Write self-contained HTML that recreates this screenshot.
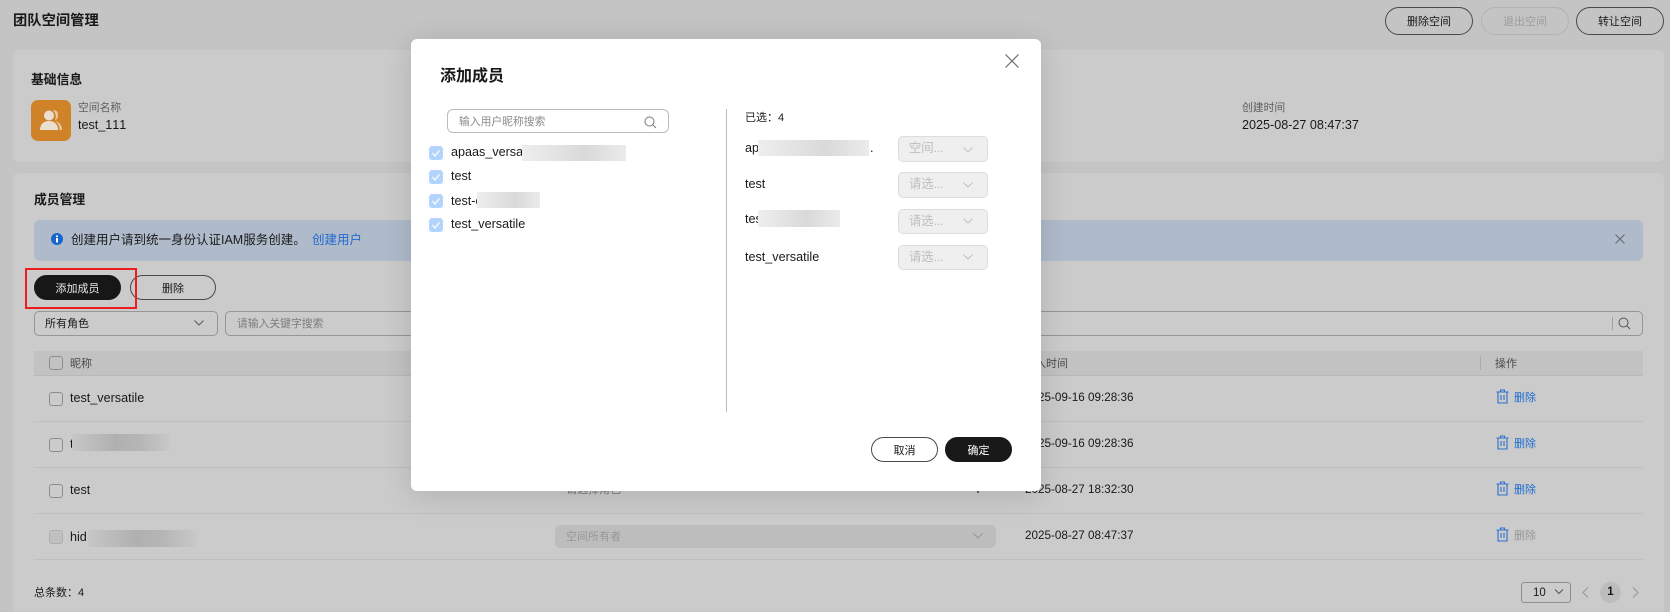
<!DOCTYPE html>
<html lang="zh"><head><meta charset="utf-8"><title>团队空间管理</title>
<style>
html,body{margin:0;padding:0;width:1670px;height:612px;overflow:hidden;background:#c4c4c4}
body{position:relative;font-family:"Liberation Sans","Noto Sans CJK SC",sans-serif;color:#191919;font-size:12.6px;font-kerning:none}
.a{position:absolute;box-sizing:border-box}
.t{position:absolute;line-height:20px;height:20px;white-space:nowrap}
.c{background:#cbcbcb;border-radius:6px}
.btn{position:absolute;box-sizing:border-box;border:1px solid #4a4a4a;border-radius:14px;text-align:center;font-size:11px;display:flex;align-items:center;justify-content:center;color:#191919}
.cb{position:absolute;box-sizing:border-box;width:14px;height:14px;border:1px solid #8e8e8e;border-radius:3px}
.ln{position:absolute;left:34px;width:1609px;height:1px;background:#bfbfbf}
.g{color:#5f5f5f}
.blur{position:absolute;background:linear-gradient(90deg,#c6c6c6,#b0b0b0 45%,#b6b6b6 70%,#c8c8c8)}
.blur2{position:absolute;background:linear-gradient(90deg,#eeeeee,#e4e4e4 30%,#d9d9d9 60%,#ebebeb)}
.del{color:#1c6dd0}
.sel{position:absolute;box-sizing:border-box;left:898px;width:90px;background:#efefef;border:1px solid #dcdcdc;border-radius:5px;color:#bdbdbd;font-size:12.3px;padding-left:10px;line-height:23px}
.chk{position:absolute;left:429px;width:14px;height:14px;background:#b3d5fd;border-radius:3px}
svg{position:absolute;overflow:visible}
</style></head><body>

<div class="t" style="left:13px;top:11px;font-size:14.3px;font-weight:700">团队空间管理</div>
<div class="btn" style="left:1385px;top:7px;width:88px;height:28px">删除空间</div>
<div class="btn" style="left:1481px;top:7px;width:88px;height:28px;border-color:#b2b2b2;color:#9c9c9c">退出空间</div>
<div class="btn" style="left:1576px;top:7px;width:88px;height:28px">转让空间</div>

<div class="a c" style="left:13px;top:50px;width:1651px;height:112px"></div>
<div class="t" style="left:31px;top:70px;font-size:12.8px;font-weight:700">基础信息</div>
<div class="a" style="left:31px;top:100px;width:40px;height:41px;border-radius:7px;background:#cf8227"></div>
<svg style="left:31px;top:100px" width="40" height="41" viewBox="0 0 40 41"><circle cx="18" cy="15.5" r="5" fill="#eadfd0"/><path d="M22 10.500c3-1 5 1 5 4.500s-1.500 4.500-3 5.500c1-3 1.500-7-2-10z" fill="#e6c9a2"/><path d="M9 30c0-6 4-9 9-9s9 3 9 9z" fill="#eadfd0"/><path d="M24 21c4 1 7 4 7 9h-2.500c0-4-1.500-7-4.500-9z" fill="#e6c9a2"/></svg>
<div class="t g" style="left:78px;top:98px;font-size:10.8px">空间名称</div>
<div class="t" style="left:78px;top:115px">test_111</div>
<div class="t g" style="left:1242px;top:98px;font-size:10.8px">创建时间</div>
<div class="t" style="left:1242px;top:115px;font-size:12.6px">2025-08-27 08:47:37</div>

<div class="a c" style="left:13px;top:173px;width:1651px;height:439px;border-radius:6px 6px 0 0"></div>
<div class="t" style="left:34px;top:190px;font-size:12.8px;font-weight:700">成员管理</div>

<div class="a" style="left:34px;top:220px;width:1609px;height:41px;background:#afbbcb;border-radius:6px"></div>
<svg style="left:51px;top:233px" width="12" height="12" viewBox="0 0 12 12"><circle cx="6" cy="6" r="6" fill="#1766cf"/><rect x="5" y="2.500" width="2" height="1.600" fill="#fff"/><rect x="5" y="5" width="2" height="4.500" fill="#fff"/></svg>
<div class="t" style="left:71px;top:230px;font-size:12.5px">创建用户请到统一身份认证IAM服务创建。</div>
<div class="t" style="left:312px;top:230px;font-size:12.5px;color:#2468cf">创建用户</div>
<svg style="left:1615px;top:234px" width="10" height="10" viewBox="0 0 10 10"><path d="M.5.500l9 9M9.500.500l-9 9" stroke="#5f6670" stroke-width="1" fill="none"/></svg>

<div class="btn" style="left:34px;top:275px;width:87px;height:25px;background:#171717;color:#e8e8e8;border-color:#171717">添加成员</div>
<div class="btn" style="left:130px;top:275px;width:86px;height:25px">删除</div>
<div class="a" style="left:25px;top:268px;width:112px;height:41px;border:2px solid #ee1c1c"></div>

<div class="a" style="left:34px;top:311px;width:184px;height:25px;border:1px solid #969696;border-radius:5px"></div>
<div class="t" style="left:45px;top:314px;font-size:11px">所有角色</div>
<svg style="left:194px;top:320px" width="10" height="6" viewBox="0 0 10 6"><path d="M.5.500L5 5 9.500.500" stroke="#5a5a5a" fill="none"/></svg>
<div class="a" style="left:225px;top:311px;width:1418px;height:25px;border:1px solid #969696;border-radius:5px"></div>
<div class="t" style="left:237px;top:314px;font-size:10.8px;color:#7c7c7c">请输入关键字搜索</div>
<div class="a" style="left:1612px;top:317px;width:1px;height:13px;background:#a0a0a0"></div>
<svg style="left:1618px;top:317px" width="13" height="13" viewBox="0 0 13 13"><circle cx="5.500" cy="5.500" r="4.500" stroke="#555" fill="none"/><path d="M9 9l3 3" stroke="#555"/></svg>

<div class="a" style="left:34px;top:351px;width:1609px;height:25px;background:#c2c2c2;border-bottom:1px solid #b8b8b8"></div>
<div class="cb" style="left:49px;top:356px"></div>
<div class="t g" style="left:70px;top:354px;font-size:11px;color:#4c4c4c">昵称</div>
<div class="t" style="left:1024px;top:354px;font-size:11px;color:#4c4c4c">加入时间</div>
<div class="a" style="left:1480px;top:356px;width:1px;height:14px;background:#aaa"></div>
<div class="t" style="left:1495px;top:354px;font-size:11px;color:#4c4c4c">操作</div>

<div class="cb" style="left:49px;top:392px"></div>
<div class="t" style="left:70px;top:388px">test_versatile</div>
<div class="cb" style="left:49px;top:438px"></div>
<div class="t" style="left:70px;top:434px">t</div>
<div class="blur" style="left:72px;top:434px;width:98px;height:17px"></div>
<div class="cb" style="left:49px;top:484px"></div>
<div class="t" style="left:70px;top:480px">test</div>
<div class="cb" style="left:49px;top:530px;background:#c0c0c0;border-color:#b0b0b0"></div>
<div class="t" style="left:70px;top:527px">hid</div>
<div class="blur" style="left:88px;top:530px;width:108px;height:17px"></div>

<div class="ln" style="top:421px"></div><div class="ln" style="top:467px"></div><div class="ln" style="top:513px"></div><div class="ln" style="top:559px"></div>

<div class="t" style="left:566px;top:480px;font-size:11px;color:#777">请选择角色</div>
<div class="a" style="left:555px;top:525px;width:441px;height:23px;background:#bdbdbd;border-radius:5px"></div>
<div class="t" style="left:566px;top:527px;font-size:11px;color:#979797">空间所有者</div>
<svg style="left:973px;top:533px" width="10" height="6" viewBox="0 0 10 6"><path d="M.5.500L5 5 9.500.500" stroke="#959595" fill="none"/></svg>
<div class="a" style="left:977px;top:491px;width:2px;height:2px;background:#666"></div>

<div class="t" style="left:1025px;top:388px;font-size:11.7px">2025-09-16 09:28:36</div>
<div class="t" style="left:1025px;top:434px;font-size:11.7px">2025-09-16 09:28:36</div>
<div class="t" style="left:1025px;top:480px;font-size:11.7px">2025-08-27 18:32:30</div>
<div class="t" style="left:1025px;top:526px;font-size:11.7px">2025-08-27 08:47:37</div>

<svg style="left:1496px;top:389px" width="13" height="15" viewBox="0 0 13 15"><path d="M.5 3h12M4.500 3V1h4v2M2 3v11h9V3M5 6v5M8 6v5" fill="none" stroke="#2c6fd0" stroke-width="1.100"/></svg>
<div class="t del" style="left:1514px;top:388px;font-size:11px">删除</div>
<svg style="left:1496px;top:435px" width="13" height="15" viewBox="0 0 13 15"><path d="M.5 3h12M4.500 3V1h4v2M2 3v11h9V3M5 6v5M8 6v5" fill="none" stroke="#2c6fd0" stroke-width="1.100"/></svg>
<div class="t del" style="left:1514px;top:434px;font-size:11px">删除</div>
<svg style="left:1496px;top:481px" width="13" height="15" viewBox="0 0 13 15"><path d="M.5 3h12M4.500 3V1h4v2M2 3v11h9V3M5 6v5M8 6v5" fill="none" stroke="#2c6fd0" stroke-width="1.100"/></svg>
<div class="t del" style="left:1514px;top:480px;font-size:11px">删除</div>
<svg style="left:1496px;top:527px" width="13" height="15" viewBox="0 0 13 15"><path d="M.5 3h12M4.500 3V1h4v2M2 3v11h9V3M5 6v5M8 6v5" fill="none" stroke="#2c6fd0" stroke-width="1.100"/></svg>
<div class="t" style="left:1514px;top:526px;font-size:11px;color:#979797">删除</div>

<div class="t" style="left:34px;top:583px;font-size:11px">总条数：4</div>
<div class="a" style="left:1521px;top:582px;width:50px;height:21px;border:1px solid #8e8e8e;border-radius:3px"></div>
<div class="t" style="left:1533px;top:583px;font-size:11.5px">10</div>
<svg style="left:1554px;top:589px" width="10" height="6" viewBox="0 0 10 6"><path d="M1 .500L5 4.500 9 .500" stroke="#555" fill="none"/></svg>
<svg style="left:1582px;top:587px" width="7" height="11" viewBox="0 0 7 11"><path d="M6 .500L1 5.500l5 5" stroke="#9a9a9a" fill="none" stroke-width="1.200"/></svg>
<div class="a" style="left:1600px;top:582px;width:21px;height:21px;border-radius:50%;background:#bdbdbd"></div>
<div class="t" style="left:1600px;top:582px;width:21px;text-align:center;font-weight:700;font-size:11.5px">1</div>
<svg style="left:1632px;top:587px" width="7" height="11" viewBox="0 0 7 11"><path d="M1 .500l5 5-5 5" stroke="#9a9a9a" fill="none" stroke-width="1.200"/></svg>

<!-- dialog -->
<div class="a" style="left:411px;top:39px;width:630px;height:452px;background:#fff;border-radius:6px;box-shadow:0 4px 30px rgba(0,0,0,.14)"></div>
<div class="t" style="left:440px;top:67px;font-size:16px;font-weight:700">添加成员</div>
<svg style="left:1005px;top:54px" width="14" height="14" viewBox="0 0 14 14"><path d="M.5.500l13 13M13.500.500l-13 13" stroke="#707070" stroke-width="1.200" fill="none"/></svg>

<div class="a" style="left:447px;top:109px;width:222px;height:24px;border:1px solid #bcbcbc;border-radius:6px"></div>
<div class="t" style="left:459px;top:112px;font-size:10.8px;color:#8a8a8a">输入用户昵称搜索</div>
<svg style="left:644px;top:116px" width="13" height="13" viewBox="0 0 13 13"><circle cx="5.500" cy="5.500" r="4.500" stroke="#777" fill="none"/><path d="M9 9l3 3" stroke="#777"/></svg>

<div class="chk" style="top:146px"></div><div class="chk" style="top:170px"></div><div class="chk" style="top:194px"></div><div class="chk" style="top:218px"></div>
<svg style="left:429px;top:146px" width="14" height="86" viewBox="0 0 14 86"><path d="M3.500 7l2.500 3 4.500-5.500M3.500 31l2.500 3 4.500-5.500M3.500 55l2.500 3 4.500-5.500M3.500 79l2.500 3 4.500-5.500" stroke="#fff" stroke-width="1.200" fill="none"/></svg>
<div class="t" style="left:451px;top:142px">apaas_versa</div>
<div class="blur2" style="left:522px;top:145px;width:104px;height:16px"></div>
<div class="t" style="left:451px;top:166px">test</div>
<div class="t" style="left:451px;top:191px">test-c</div>
<div class="blur2" style="left:477px;top:192px;width:63px;height:16px"></div>
<div class="t" style="left:451px;top:214px">test_versatile</div>

<div class="a" style="left:726px;top:109px;width:1px;height:303px;background:#bdbdbd"></div>
<div class="t" style="left:745px;top:108px;font-size:11px">已选：4</div>

<div class="t" style="left:745px;top:138px">ap</div>
<div class="blur2" style="left:758px;top:140px;width:111px;height:16px"></div>
<div class="t" style="left:870px;top:138px">.</div>
<div class="t" style="left:745px;top:174px">test</div>
<div class="t" style="left:745px;top:209px">tes</div>
<div class="blur2" style="left:758px;top:210px;width:82px;height:17px"></div>
<div class="t" style="left:745px;top:247px">test_versatile</div>

<div class="sel" style="top:136px;height:26px">空间...</div>
<div class="sel" style="top:172px;height:26px">请选...</div>
<div class="sel" style="top:209px;height:25px">请选...</div>
<div class="sel" style="top:245px;height:25px">请选...</div>
<svg style="left:963px;top:147px" width="10" height="120" viewBox="0 0 10 120"><path d="M.5.500L5 5 9.500.500M.5 35.500L5 40l4.500-4.500M.5 71.500L5 76l4.500-4.500M.5 107.500L5 112l4.500-4.500" stroke="#c2c2c2" fill="none"/></svg>

<div class="btn" style="left:871px;top:437px;width:67px;height:25px;background:#fff">取消</div>
<div class="btn" style="left:945px;top:437px;width:67px;height:25px;background:#191919;border-color:#191919;color:#fff">确定</div>
</body></html>
